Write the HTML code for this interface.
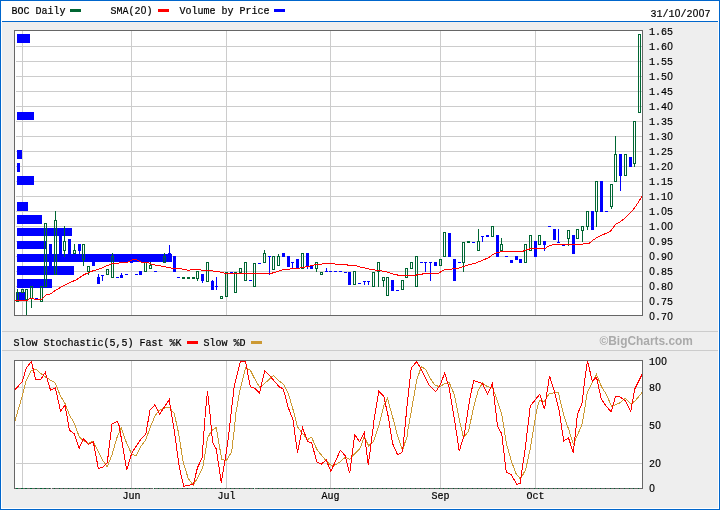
<!DOCTYPE html>
<html><head><meta charset="utf-8"><title>BOC Daily</title>
<style>html,body{margin:0;padding:0;background:#fff}svg{display:block}text{font-family:"Liberation Mono",monospace;font-size:10px;fill:#000;stroke:#000;stroke-width:0.2px}.z{font-family:"Liberation Sans",sans-serif}.wm{font-family:"Liberation Sans",sans-serif;font-weight:bold;font-size:11.9px;fill:#aaaaaa;stroke:none}</style></head><body>
<svg width="720" height="510" viewBox="0 0 720 510" shape-rendering="crispEdges">
<rect x="0" y="0" width="720" height="510" fill="#0066cc"/>
<rect x="1" y="1" width="718" height="508" fill="#ffffff"/>
<rect x="2" y="22" width="716" height="486" fill="#eeeeee"/>
<rect x="2" y="21" width="716" height="1" fill="#0066cc"/>
<rect x="2" y="331" width="716" height="1" fill="#cccccc"/>
<rect x="2" y="350" width="716" height="1" fill="#cccccc"/>
<rect x="14" y="30" width="629" height="286" fill="#666666"/>
<rect x="15" y="31" width="627" height="284" fill="#ffffff"/>
<rect x="16" y="46" width="626" height="1" fill="#cccccc"/>
<rect x="16" y="61" width="626" height="1" fill="#cccccc"/>
<rect x="16" y="76" width="626" height="1" fill="#cccccc"/>
<rect x="16" y="91" width="626" height="1" fill="#cccccc"/>
<rect x="16" y="106" width="626" height="1" fill="#cccccc"/>
<rect x="16" y="121" width="626" height="1" fill="#cccccc"/>
<rect x="16" y="136" width="626" height="1" fill="#cccccc"/>
<rect x="16" y="151" width="626" height="1" fill="#cccccc"/>
<rect x="16" y="166" width="626" height="1" fill="#cccccc"/>
<rect x="16" y="181" width="626" height="1" fill="#cccccc"/>
<rect x="16" y="196" width="626" height="1" fill="#cccccc"/>
<rect x="16" y="211" width="626" height="1" fill="#cccccc"/>
<rect x="16" y="226" width="626" height="1" fill="#cccccc"/>
<rect x="16" y="241" width="626" height="1" fill="#cccccc"/>
<rect x="16" y="256" width="626" height="1" fill="#cccccc"/>
<rect x="16" y="271" width="626" height="1" fill="#cccccc"/>
<rect x="16" y="286" width="626" height="1" fill="#cccccc"/>
<rect x="16" y="301" width="626" height="1" fill="#cccccc"/>
<rect x="22" y="31" width="1" height="284" fill="#cccccc"/>
<rect x="131" y="31" width="1" height="284" fill="#cccccc"/>
<rect x="226" y="31" width="1" height="284" fill="#cccccc"/>
<rect x="330" y="31" width="1" height="284" fill="#cccccc"/>
<rect x="440" y="31" width="1" height="284" fill="#cccccc"/>
<rect x="535" y="31" width="1" height="284" fill="#cccccc"/>
<rect x="14" y="360" width="629" height="129" fill="#666666"/>
<rect x="15" y="361" width="627" height="127" fill="#ffffff"/>
<rect x="16" y="387" width="626" height="1" fill="#cccccc"/>
<rect x="16" y="425" width="626" height="1" fill="#cccccc"/>
<rect x="16" y="463" width="626" height="1" fill="#cccccc"/>
<rect x="22" y="361" width="1" height="127" fill="#cccccc"/>
<rect x="131" y="361" width="1" height="127" fill="#cccccc"/>
<rect x="226" y="361" width="1" height="127" fill="#cccccc"/>
<rect x="330" y="361" width="1" height="127" fill="#cccccc"/>
<rect x="440" y="361" width="1" height="127" fill="#cccccc"/>
<rect x="535" y="361" width="1" height="127" fill="#cccccc"/>
<rect x="17" y="34" width="13" height="9" fill="#0000ff"/>
<rect x="17" y="112" width="17" height="8" fill="#0000ff"/>
<rect x="17" y="150" width="5" height="9" fill="#0000ff"/>
<rect x="17" y="163" width="3" height="9" fill="#0000ff"/>
<rect x="17" y="176" width="17" height="9" fill="#0000ff"/>
<rect x="17" y="202" width="11" height="9" fill="#0000ff"/>
<rect x="17" y="215" width="25" height="9" fill="#0000ff"/>
<rect x="17" y="228" width="55" height="8" fill="#0000ff"/>
<rect x="17" y="241" width="29" height="8" fill="#0000ff"/>
<rect x="17" y="254" width="155" height="8" fill="#0000ff"/>
<rect x="17" y="266" width="57" height="9" fill="#0000ff"/>
<rect x="17" y="279" width="35" height="9" fill="#0000ff"/>
<rect x="17" y="292" width="8" height="9" fill="#0000ff"/>
<rect x="17" y="289" width="1" height="3" fill="#006633"/>
<path d="M16 292h3v10h-3z M17 293v8h1v-8z" fill-rule="evenodd" fill="#006633"/>
<path d="M21 289h3v4h-3z M22 290v2h1v-2z" fill-rule="evenodd" fill="#006633"/>
<rect x="26" y="300" width="1" height="15" fill="#006633"/>
<path d="M25 289h3v11h-3z M26 290v9h1v-9z" fill-rule="evenodd" fill="#006633"/>
<rect x="31" y="299" width="1" height="9" fill="#006633"/>
<path d="M30 286h3v13h-3z M31 287v11h1v-11z" fill-rule="evenodd" fill="#006633"/>
<rect x="35" y="298" width="3" height="1" fill="#0000ff"/>
<path d="M40 286h3v16h-3z M41 287v14h1v-14z" fill-rule="evenodd" fill="#006633"/>
<path d="M44 223h3v64h-3z M45 224v62h1v-62z" fill-rule="evenodd" fill="#006633"/>
<rect x="49" y="244" width="3" height="25" fill="#0000ff"/>
<rect x="55" y="211" width="1" height="9" fill="#006633"/>
<path d="M54 220h3v55h-3z M55 221v53h1v-53z" fill-rule="evenodd" fill="#006633"/>
<rect x="59" y="232" width="3" height="27" fill="#0000ff"/>
<rect x="64" y="226" width="1" height="15" fill="#006633"/>
<rect x="64" y="251" width="1" height="6" fill="#006633"/>
<path d="M63 241h3v10h-3z M64 242v8h1v-8z" fill-rule="evenodd" fill="#006633"/>
<rect x="68" y="239" width="3" height="20" fill="#0000ff"/>
<rect x="74" y="244" width="1" height="6" fill="#006633"/>
<path d="M73 250h3v4h-3z M74 251v2h1v-2z" fill-rule="evenodd" fill="#006633"/>
<rect x="79" y="251" width="1" height="3" fill="#0000ff"/>
<rect x="78" y="244" width="3" height="7" fill="#0000ff"/>
<rect x="83" y="260" width="1" height="6" fill="#006633"/>
<path d="M82 244h3v16h-3z M83 245v14h1v-14z" fill-rule="evenodd" fill="#006633"/>
<rect x="88" y="272" width="1" height="3" fill="#006633"/>
<path d="M87 266h3v6h-3z M88 267v4h1v-4z" fill-rule="evenodd" fill="#006633"/>
<rect x="92" y="258" width="3" height="8" fill="#0000ff"/>
<rect x="98" y="274" width="1" height="3" fill="#0000ff"/>
<rect x="97" y="277" width="3" height="7" fill="#0000ff"/>
<rect x="102" y="276" width="1" height="5" fill="#0000ff"/>
<rect x="101" y="275" width="3" height="1" fill="#0000ff"/>
<path d="M106 269h3v6h-3z M107 270v4h1v-4z" fill-rule="evenodd" fill="#006633"/>
<rect x="112" y="253" width="1" height="3" fill="#006633"/>
<path d="M111 256h3v22h-3z M112 257v20h1v-20z" fill-rule="evenodd" fill="#006633"/>
<rect x="116" y="277" width="3" height="1" fill="#0000ff"/>
<rect x="121" y="273" width="1" height="2" fill="#0000ff"/>
<rect x="120" y="275" width="3" height="3" fill="#0000ff"/>
<rect x="125" y="274" width="3" height="1" fill="#0000ff"/>
<rect x="130" y="258" width="3" height="5" fill="#0000ff"/>
<rect x="135" y="274" width="3" height="1" fill="#0000ff"/>
<rect x="139" y="271" width="3" height="4" fill="#0000ff"/>
<path d="M144 262h3v10h-3z M145 263v8h1v-8z" fill-rule="evenodd" fill="#006633"/>
<rect x="150" y="262" width="1" height="3" fill="#006633"/>
<path d="M149 265h3v4h-3z M150 266v2h1v-2z" fill-rule="evenodd" fill="#006633"/>
<rect x="154" y="271" width="3" height="1" fill="#0000ff"/>
<rect x="164" y="253" width="1" height="3" fill="#006633"/>
<path d="M163 256h3v7h-3z M164 257v5h1v-5z" fill-rule="evenodd" fill="#006633"/>
<rect x="169" y="245" width="1" height="8" fill="#0000ff"/>
<rect x="168" y="253" width="3" height="6" fill="#0000ff"/>
<rect x="173" y="256" width="3" height="16" fill="#0000ff"/>
<rect x="177" y="277" width="3" height="1" fill="#0000ff"/>
<rect x="182" y="277" width="3" height="2" fill="#006633"/>
<rect x="187" y="277" width="3" height="2" fill="#006633"/>
<rect x="192" y="277" width="3" height="2" fill="#006633"/>
<rect x="197" y="279" width="1" height="2" fill="#006633"/>
<path d="M196 271h3v8h-3z M197 272v6h1v-6z" fill-rule="evenodd" fill="#006633"/>
<rect x="202" y="281" width="1" height="2" fill="#0000ff"/>
<rect x="201" y="274" width="3" height="7" fill="#0000ff"/>
<path d="M206 262h3v20h-3z M207 263v18h1v-18z" fill-rule="evenodd" fill="#006633"/>
<rect x="212" y="280" width="1" height="1" fill="#0000ff"/>
<rect x="211" y="281" width="3" height="9" fill="#0000ff"/>
<rect x="216" y="277" width="1" height="9" fill="#0000ff"/>
<rect x="216" y="287" width="1" height="3" fill="#0000ff"/>
<rect x="215" y="286" width="3" height="1" fill="#0000ff"/>
<path d="M220 296h3v3h-3z M221 297v1h1v-1z" fill-rule="evenodd" fill="#006633"/>
<path d="M225 272h3v25h-3z M226 273v23h1v-23z" fill-rule="evenodd" fill="#006633"/>
<rect x="230" y="272" width="3" height="1" fill="#0000ff"/>
<path d="M234 272h3v21h-3z M235 273v19h1v-19z" fill-rule="evenodd" fill="#006633"/>
<path d="M239 268h3v5h-3z M240 269v3h1v-3z" fill-rule="evenodd" fill="#006633"/>
<path d="M244 262h3v19h-3z M245 263v17h1v-17z" fill-rule="evenodd" fill="#006633"/>
<rect x="249" y="280" width="3" height="1" fill="#0000ff"/>
<path d="M253 263h3v24h-3z M254 264v22h1v-22z" fill-rule="evenodd" fill="#006633"/>
<rect x="258" y="263" width="3" height="1" fill="#0000ff"/>
<rect x="264" y="250" width="1" height="3" fill="#006633"/>
<path d="M263 253h3v10h-3z M264 254v8h1v-8z" fill-rule="evenodd" fill="#006633"/>
<rect x="269" y="257" width="1" height="18" fill="#0000ff"/>
<rect x="268" y="256" width="3" height="1" fill="#0000ff"/>
<path d="M272 256h3v14h-3z M273 257v12h1v-12z" fill-rule="evenodd" fill="#006633"/>
<rect x="278" y="254" width="1" height="2" fill="#006633"/>
<path d="M277 256h3v10h-3z M278 257v8h1v-8z" fill-rule="evenodd" fill="#006633"/>
<rect x="282" y="253" width="3" height="4" fill="#0000ff"/>
<rect x="287" y="256" width="3" height="11" fill="#0000ff"/>
<rect x="292" y="263" width="1" height="6" fill="#0000ff"/>
<rect x="291" y="262" width="3" height="1" fill="#0000ff"/>
<rect x="296" y="259" width="3" height="10" fill="#0000ff"/>
<path d="M301 253h3v16h-3z M302 254v14h1v-14z" fill-rule="evenodd" fill="#006633"/>
<rect x="307" y="267" width="1" height="2" fill="#0000ff"/>
<rect x="306" y="253" width="3" height="14" fill="#0000ff"/>
<rect x="310" y="265" width="3" height="4" fill="#0000ff"/>
<rect x="316" y="269" width="1" height="3" fill="#006633"/>
<path d="M315 262h3v7h-3z M316 263v5h1v-5z" fill-rule="evenodd" fill="#006633"/>
<path d="M320 272h3v3h-3z M321 273v1h1v-1z" fill-rule="evenodd" fill="#006633"/>
<rect x="326" y="268" width="1" height="3" fill="#0000ff"/>
<rect x="325" y="271" width="3" height="1" fill="#0000ff"/>
<rect x="329" y="271" width="3" height="1" fill="#0000ff"/>
<rect x="334" y="271" width="3" height="1" fill="#0000ff"/>
<rect x="339" y="271" width="3" height="1" fill="#0000ff"/>
<rect x="344" y="272" width="3" height="1" fill="#0000ff"/>
<rect x="348" y="272" width="3" height="13" fill="#0000ff"/>
<path d="M353 271h3v14h-3z M354 272v12h1v-12z" fill-rule="evenodd" fill="#006633"/>
<rect x="358" y="283" width="3" height="1" fill="#0000ff"/>
<rect x="364" y="282" width="1" height="3" fill="#0000ff"/>
<rect x="363" y="281" width="3" height="1" fill="#0000ff"/>
<rect x="368" y="282" width="1" height="3" fill="#0000ff"/>
<rect x="367" y="281" width="3" height="1" fill="#0000ff"/>
<path d="M372 272h3v15h-3z M373 273v13h1v-13z" fill-rule="evenodd" fill="#006633"/>
<rect x="378" y="272" width="1" height="15" fill="#006633"/>
<path d="M377 262h3v10h-3z M378 263v8h1v-8z" fill-rule="evenodd" fill="#006633"/>
<rect x="383" y="281" width="1" height="6" fill="#006633"/>
<path d="M382 277h3v4h-3z M383 278v2h1v-2z" fill-rule="evenodd" fill="#006633"/>
<path d="M386 277h3v19h-3z M387 278v17h1v-17z" fill-rule="evenodd" fill="#006633"/>
<rect x="391" y="280" width="3" height="11" fill="#0000ff"/>
<rect x="396" y="290" width="3" height="1" fill="#0000ff"/>
<path d="M401 280h3v10h-3z M402 281v8h1v-8z" fill-rule="evenodd" fill="#006633"/>
<path d="M405 268h3v10h-3z M406 269v8h1v-8z" fill-rule="evenodd" fill="#006633"/>
<path d="M410 262h3v7h-3z M411 263v5h1v-5z" fill-rule="evenodd" fill="#006633"/>
<path d="M415 256h3v31h-3z M416 257v29h1v-29z" fill-rule="evenodd" fill="#006633"/>
<rect x="420" y="262" width="3" height="1" fill="#0000ff"/>
<rect x="425" y="263" width="1" height="9" fill="#0000ff"/>
<rect x="424" y="262" width="3" height="1" fill="#0000ff"/>
<rect x="430" y="263" width="1" height="18" fill="#0000ff"/>
<rect x="429" y="262" width="3" height="1" fill="#0000ff"/>
<rect x="434" y="262" width="3" height="4" fill="#0000ff"/>
<path d="M439 259h3v7h-3z M440 260v5h1v-5z" fill-rule="evenodd" fill="#006633"/>
<path d="M443 232h3v25h-3z M444 233v23h1v-23z" fill-rule="evenodd" fill="#006633"/>
<rect x="448" y="233" width="3" height="24" fill="#0000ff"/>
<rect x="453" y="259" width="3" height="22" fill="#0000ff"/>
<rect x="458" y="262" width="3" height="1" fill="#0000ff"/>
<rect x="463" y="263" width="1" height="9" fill="#006633"/>
<path d="M462 242h3v21h-3z M463 243v19h1v-19z" fill-rule="evenodd" fill="#006633"/>
<rect x="467" y="241" width="3" height="2" fill="#006633"/>
<rect x="472" y="242" width="3" height="1" fill="#0000ff"/>
<rect x="478" y="229" width="1" height="12" fill="#006633"/>
<path d="M477 241h3v10h-3z M478 242v8h1v-8z" fill-rule="evenodd" fill="#006633"/>
<rect x="482" y="237" width="1" height="5" fill="#0000ff"/>
<rect x="481" y="236" width="3" height="1" fill="#0000ff"/>
<rect x="486" y="235" width="3" height="2" fill="#0000ff"/>
<path d="M491 226h3v11h-3z M492 227v9h1v-9z" fill-rule="evenodd" fill="#006633"/>
<rect x="496" y="235" width="3" height="22" fill="#0000ff"/>
<rect x="501" y="238" width="1" height="6" fill="#006633"/>
<path d="M500 244h3v7h-3z M501 245v5h1v-5z" fill-rule="evenodd" fill="#006633"/>
<rect x="505" y="256" width="3" height="1" fill="#0000ff"/>
<rect x="510" y="260" width="3" height="3" fill="#0000ff"/>
<rect x="515" y="256" width="3" height="4" fill="#0000ff"/>
<rect x="519" y="259" width="3" height="4" fill="#0000ff"/>
<path d="M524 244h3v19h-3z M525 245v17h1v-17z" fill-rule="evenodd" fill="#006633"/>
<path d="M529 235h3v16h-3z M530 236v14h1v-14z" fill-rule="evenodd" fill="#006633"/>
<rect x="534" y="241" width="3" height="16" fill="#0000ff"/>
<path d="M538 235h3v10h-3z M539 236v8h1v-8z" fill-rule="evenodd" fill="#006633"/>
<rect x="544" y="245" width="1" height="6" fill="#0000ff"/>
<rect x="543" y="241" width="3" height="4" fill="#0000ff"/>
<rect x="548" y="226" width="3" height="1" fill="#0000ff"/>
<rect x="553" y="229" width="3" height="11" fill="#0000ff"/>
<rect x="558" y="229" width="1" height="13" fill="#0000ff"/>
<rect x="557" y="242" width="3" height="1" fill="#0000ff"/>
<rect x="562" y="245" width="3" height="1" fill="#0000ff"/>
<rect x="568" y="239" width="1" height="7" fill="#006633"/>
<path d="M567 230h3v9h-3z M568 231v7h1v-7z" fill-rule="evenodd" fill="#006633"/>
<rect x="572" y="235" width="3" height="19" fill="#0000ff"/>
<path d="M576 229h3v10h-3z M577 230v8h1v-8z" fill-rule="evenodd" fill="#006633"/>
<rect x="582" y="231" width="1" height="11" fill="#006633"/>
<path d="M581 226h3v5h-3z M582 227v3h1v-3z" fill-rule="evenodd" fill="#006633"/>
<rect x="587" y="227" width="1" height="3" fill="#006633"/>
<path d="M586 211h3v16h-3z M587 212v14h1v-14z" fill-rule="evenodd" fill="#006633"/>
<rect x="591" y="211" width="3" height="19" fill="#0000ff"/>
<rect x="596" y="212" width="1" height="15" fill="#006633"/>
<path d="M595 181h3v31h-3z M596 182v29h1v-29z" fill-rule="evenodd" fill="#006633"/>
<rect x="600" y="181" width="3" height="31" fill="#0000ff"/>
<rect x="605" y="211" width="3" height="1" fill="#0000ff"/>
<rect x="611" y="207" width="1" height="2" fill="#006633"/>
<path d="M610 184h3v23h-3z M611 185v21h1v-21z" fill-rule="evenodd" fill="#006633"/>
<rect x="615" y="136" width="1" height="18" fill="#006633"/>
<path d="M614 154h3v28h-3z M615 155v26h1v-26z" fill-rule="evenodd" fill="#006633"/>
<rect x="620" y="176" width="1" height="15" fill="#0000ff"/>
<rect x="619" y="154" width="3" height="22" fill="#0000ff"/>
<path d="M624 154h3v22h-3z M625 155v20h1v-20z" fill-rule="evenodd" fill="#006633"/>
<rect x="629" y="157" width="3" height="10" fill="#0000ff"/>
<rect x="634" y="164" width="1" height="3" fill="#006633"/>
<path d="M633 121h3v43h-3z M634 122v41h1v-41z" fill-rule="evenodd" fill="#006633"/>
<path d="M638 34h3v79h-3z M639 35v77h1v-77z" fill-rule="evenodd" fill="#006633"/>
<clipPath id="c1"><rect x="15" y="31" width="628" height="284"/></clipPath>
<clipPath id="c2"><rect x="15" y="361" width="628" height="127"/></clipPath>
<g clip-path="url(#c1)">
<polyline points="15.0,300.5 28.0,300.0 30.0,298.5 33.0,298.5 35.0,299.7 41.5,299.7 46.4,294.8 50.8,293.9 55.2,290.4 66.5,284.1 76.5,279.7 84.0,274.7 88.4,272.8 92.8,270.9 100.0,268.8 111.0,264.0 128.0,262.0 132.0,260.0 135.0,259.4 138.0,260.5 141.0,262.0 147.0,262.0 152.0,264.5 158.0,265.5 171.0,268.0 180.0,268.5 187.0,270.0 190.0,270.0 197.0,269.5 205.0,270.5 213.0,271.0 220.0,272.0 226.0,273.5 270.0,273.5 275.0,272.5 282.0,270.0 290.0,269.0 300.0,268.0 305.0,267.0 310.0,266.0 316.0,264.5 322.0,264.0 326.0,263.2 332.0,263.2 335.0,264.0 345.0,264.5 350.0,265.5 355.0,265.5 360.0,267.0 365.0,268.0 370.0,269.2 378.0,270.5 385.0,271.5 390.0,273.0 395.0,274.5 400.0,275.5 413.0,275.5 420.0,274.5 425.0,273.5 438.0,273.5 444.0,270.0 452.0,269.0 458.0,268.5 462.0,267.0 470.0,264.5 476.0,263.0 482.0,260.5 488.0,258.0 493.0,254.5 497.0,252.5 502.0,251.7 523.0,251.2 527.0,249.5 532.0,248.5 545.0,248.5 548.0,246.5 553.0,244.5 580.0,244.5 589.7,243.0 593.2,240.0 596.8,237.6 602.6,234.7 607.4,233.0 611.1,230.6 615.6,224.1 620.3,221.8 625.6,217.6 632.0,211.2 636.8,204.7 642.0,196.5" fill="none" stroke="#ff0000" stroke-width="1"/>
</g>
<g clip-path="url(#c2)">
<polyline points="15.0,420.7 22.5,395.2 26.2,380.7 30.8,371.0 35.8,369.0 40.8,373.5 45.3,376.8 50.5,380.2 54.7,382.3 56.7,386.0 60.0,395.2 65.0,403.5 69.5,415.2 74.2,423.0 79.2,436.7 83.3,440.8 88.3,443.3 93.3,441.3 97.5,450.0 102.5,460.0 107.2,466.7 112.0,455.0 116.7,438.3 121.3,427.5 125.8,441.0 131.7,454.2 136.3,455.8 140.8,446.3 145.8,440.0 150.0,427.7 155.0,416.0 159.2,410.2 164.2,408.2 169.2,407.3 174.2,413.5 178.3,431.7 183.3,462.5 188.3,478.7 193.3,485.0 198.3,476.7 202.8,467.5 207.5,438.3 211.7,430.5 216.2,427.6 221.7,459.2 226.2,460.8 231.7,451.7 234.2,430.0 235.8,413.5 240.0,389.8 245.7,367.7 250.3,370.2 255.0,379.3 260.0,388.0 264.7,383.5 269.2,379.3 273.3,375.5 278.7,380.7 283.7,384.3 288.3,393.5 293.0,409.5 297.5,426.7 302.5,433.4 307.5,439.5 311.7,437.3 316.7,449.2 321.3,455.0 326.2,460.8 330.8,465.0 335.3,465.0 340.3,461.7 345.3,457.2 349.7,459.2 354.7,453.8 360.0,448.3 364.2,437.0 368.7,445.8 373.3,441.7 378.5,427.0 383.7,406.0 387.5,398.5 392.5,416.5 397.5,435.5 402.5,450.0 407.0,436.7 408.0,429.3 412.2,406.0 416.7,380.2 421.3,366.8 425.8,369.3 430.8,379.3 435.0,385.2 440.0,386.8 444.7,383.5 449.2,382.7 454.2,394.3 459.2,419.3 463.5,437.6 468.5,431.3 473.7,407.0 478.0,391.0 482.5,382.7 487.5,386.8 492.5,387.7 497.5,401.0 501.7,414.3 503.7,426.0 506.3,443.3 510.8,459.2 515.8,473.3 520.5,479.2 525.8,469.2 530.3,448.3 535.0,420.0 537.5,406.0 539.7,400.2 544.5,401.3 549.2,393.5 553.3,393.0 558.3,392.3 563.7,415.2 568.9,430.0 573.3,444.2 578.3,433.3 582.0,424.5 584.0,413.0 587.3,392.3 592.3,382.8 596.5,374.4 601.3,386.2 606.3,394.5 611.9,406.8 615.6,404.6 620.3,402.7 625.3,398.2 630.7,403.8 634.8,401.3 642.0,392.5" fill="none" stroke="#cc9933" stroke-width="1"/>
<polyline points="15.0,389.8 22.5,381.3 26.2,368.2 31.3,361.5 35.8,379.8 40.8,379.3 45.3,372.3 50.5,390.2 55.3,387.7 60.5,411.0 65.0,405.2 69.5,430.3 74.2,433.7 79.2,448.3 83.3,438.7 88.3,444.2 93.3,441.7 98.3,468.3 102.5,467.5 107.2,463.0 112.0,424.2 117.0,421.3 119.2,425.8 126.7,470.0 131.7,453.3 135.8,446.7 140.8,439.2 145.8,434.0 150.0,410.2 155.0,404.7 159.5,414.3 169.2,399.7 170.8,410.0 174.2,430.0 179.2,466.7 183.7,486.3 188.3,485.3 193.3,484.5 197.5,467.5 202.0,458.3 205.5,411.0 207.5,391.3 210.0,414.3 212.5,441.7 216.3,449.2 221.3,482.5 225.8,455.0 228.3,438.5 234.2,386.0 240.3,361.8 245.5,361.5 250.3,386.8 255.0,388.5 259.5,393.0 264.7,370.7 269.2,375.2 274.2,381.0 279.2,386.8 283.3,389.0 288.3,407.7 293.0,420.0 297.5,452.5 302.5,427.2 307.5,441.7 311.7,442.5 316.7,462.0 321.3,464.2 326.2,460.0 330.8,471.3 335.3,461.7 340.3,450.3 345.3,455.8 349.7,473.3 354.7,434.7 359.7,441.7 364.2,432.5 368.3,465.0 373.3,426.7 374.2,418.5 378.8,391.3 383.7,396.0 388.3,416.8 392.5,443.3 397.5,454.7 402.5,452.5 407.2,404.3 411.3,368.0 416.7,361.5 421.3,369.3 429.2,385.2 435.8,391.5 440.0,385.2 444.7,373.2 449.2,387.7 455.0,422.7 459.2,451.3 464.2,435.0 470.0,397.7 473.7,380.7 482.5,383.5 487.5,394.3 492.5,383.5 497.5,426.0 501.7,433.8 506.3,472.5 510.8,474.2 516.7,484.2 520.0,483.8 525.0,450.0 530.3,406.0 535.0,400.2 539.7,394.3 544.5,409.3 549.5,375.7 554.2,391.0 559.2,411.0 563.7,441.0 568.5,438.0 573.3,452.5 577.5,414.0 582.0,403.5 584.5,381.7 587.5,361.0 592.3,381.1 596.5,377.2 601.3,399.0 606.3,406.3 611.1,411.9 615.6,396.2 620.3,397.1 625.3,400.7 630.7,411.3 634.8,389.0 642.0,374.5" fill="none" stroke="#ff0000" stroke-width="1"/>
</g>
<rect x="16" y="488" width="2" height="1" fill="#006633"/>
<rect x="21" y="488" width="2" height="1" fill="#006633"/>
<rect x="25" y="488" width="2" height="1" fill="#006633"/>
<rect x="30" y="488" width="2" height="1" fill="#006633"/>
<rect x="35" y="488" width="2" height="1" fill="#006633"/>
<rect x="40" y="488" width="2" height="1" fill="#006633"/>
<rect x="44" y="488" width="2" height="1" fill="#006633"/>
<rect x="49" y="488" width="1" height="1" fill="#006633"/>
<rect x="54" y="488" width="1" height="1" fill="#006633"/>
<rect x="59" y="488" width="1" height="1" fill="#006633"/>
<rect x="63" y="488" width="1" height="1" fill="#006633"/>
<rect x="68" y="488" width="1" height="1" fill="#006633"/>
<rect x="73" y="488" width="1" height="1" fill="#006633"/>
<rect x="78" y="488" width="1" height="1" fill="#006633"/>
<rect x="82" y="488" width="1" height="1" fill="#006633"/>
<rect x="87" y="488" width="1" height="1" fill="#006633"/>
<rect x="92" y="488" width="1" height="1" fill="#006633"/>
<rect x="97" y="488" width="1" height="1" fill="#006633"/>
<rect x="101" y="488" width="1" height="1" fill="#006633"/>
<rect x="106" y="488" width="1" height="1" fill="#006633"/>
<rect x="111" y="488" width="1" height="1" fill="#006633"/>
<rect x="116" y="488" width="1" height="1" fill="#006633"/>
<rect x="120" y="488" width="1" height="1" fill="#006633"/>
<rect x="125" y="488" width="1" height="1" fill="#006633"/>
<rect x="130" y="488" width="1" height="1" fill="#006633"/>
<rect x="135" y="488" width="1" height="1" fill="#006633"/>
<rect x="139" y="488" width="1" height="1" fill="#006633"/>
<rect x="144" y="488" width="1" height="1" fill="#006633"/>
<rect x="149" y="488" width="1" height="1" fill="#006633"/>
<rect x="154" y="488" width="1" height="1" fill="#006633"/>
<rect x="158" y="488" width="1" height="1" fill="#006633"/>
<rect x="163" y="488" width="1" height="1" fill="#006633"/>
<rect x="168" y="488" width="1" height="1" fill="#006633"/>
<rect x="173" y="488" width="1" height="1" fill="#006633"/>
<rect x="177" y="488" width="1" height="1" fill="#006633"/>
<rect x="182" y="488" width="1" height="1" fill="#006633"/>
<rect x="187" y="488" width="1" height="1" fill="#006633"/>
<rect x="192" y="488" width="1" height="1" fill="#006633"/>
<rect x="196" y="488" width="1" height="1" fill="#006633"/>
<rect x="201" y="488" width="1" height="1" fill="#006633"/>
<rect x="206" y="488" width="1" height="1" fill="#006633"/>
<rect x="211" y="488" width="1" height="1" fill="#006633"/>
<rect x="215" y="488" width="1" height="1" fill="#006633"/>
<rect x="220" y="488" width="1" height="1" fill="#006633"/>
<rect x="225" y="488" width="1" height="1" fill="#006633"/>
<rect x="230" y="488" width="1" height="1" fill="#006633"/>
<rect x="234" y="488" width="1" height="1" fill="#006633"/>
<rect x="239" y="488" width="1" height="1" fill="#006633"/>
<rect x="244" y="488" width="1" height="1" fill="#006633"/>
<rect x="249" y="488" width="1" height="1" fill="#006633"/>
<rect x="253" y="488" width="1" height="1" fill="#006633"/>
<rect x="258" y="488" width="1" height="1" fill="#006633"/>
<rect x="263" y="488" width="1" height="1" fill="#006633"/>
<rect x="268" y="488" width="1" height="1" fill="#006633"/>
<rect x="272" y="488" width="1" height="1" fill="#006633"/>
<rect x="277" y="488" width="1" height="1" fill="#006633"/>
<rect x="282" y="488" width="1" height="1" fill="#006633"/>
<rect x="287" y="488" width="1" height="1" fill="#006633"/>
<rect x="291" y="488" width="1" height="1" fill="#006633"/>
<rect x="296" y="488" width="1" height="1" fill="#006633"/>
<rect x="301" y="488" width="1" height="1" fill="#006633"/>
<rect x="306" y="488" width="1" height="1" fill="#006633"/>
<rect x="310" y="488" width="1" height="1" fill="#006633"/>
<rect x="315" y="488" width="1" height="1" fill="#006633"/>
<rect x="320" y="488" width="1" height="1" fill="#006633"/>
<rect x="325" y="488" width="1" height="1" fill="#006633"/>
<rect x="329" y="488" width="1" height="1" fill="#006633"/>
<rect x="334" y="488" width="1" height="1" fill="#006633"/>
<rect x="339" y="488" width="1" height="1" fill="#006633"/>
<rect x="344" y="488" width="1" height="1" fill="#006633"/>
<rect x="348" y="488" width="1" height="1" fill="#006633"/>
<rect x="353" y="488" width="1" height="1" fill="#006633"/>
<rect x="358" y="488" width="1" height="1" fill="#006633"/>
<rect x="363" y="488" width="1" height="1" fill="#006633"/>
<rect x="367" y="488" width="1" height="1" fill="#006633"/>
<rect x="372" y="488" width="1" height="1" fill="#006633"/>
<rect x="377" y="488" width="1" height="1" fill="#006633"/>
<rect x="382" y="488" width="1" height="1" fill="#006633"/>
<rect x="386" y="488" width="1" height="1" fill="#006633"/>
<rect x="391" y="488" width="1" height="1" fill="#006633"/>
<rect x="396" y="488" width="1" height="1" fill="#006633"/>
<rect x="401" y="488" width="1" height="1" fill="#006633"/>
<rect x="405" y="488" width="1" height="1" fill="#006633"/>
<rect x="410" y="488" width="1" height="1" fill="#006633"/>
<rect x="415" y="488" width="1" height="1" fill="#006633"/>
<rect x="420" y="488" width="1" height="1" fill="#006633"/>
<rect x="424" y="488" width="1" height="1" fill="#006633"/>
<rect x="429" y="488" width="1" height="1" fill="#006633"/>
<rect x="434" y="488" width="1" height="1" fill="#006633"/>
<rect x="439" y="488" width="1" height="1" fill="#006633"/>
<rect x="443" y="488" width="1" height="1" fill="#006633"/>
<rect x="448" y="488" width="1" height="1" fill="#006633"/>
<rect x="453" y="488" width="1" height="1" fill="#006633"/>
<rect x="458" y="488" width="1" height="1" fill="#006633"/>
<rect x="462" y="488" width="1" height="1" fill="#006633"/>
<rect x="467" y="488" width="1" height="1" fill="#006633"/>
<rect x="472" y="488" width="1" height="1" fill="#006633"/>
<rect x="477" y="488" width="1" height="1" fill="#006633"/>
<rect x="481" y="488" width="1" height="1" fill="#006633"/>
<rect x="486" y="488" width="1" height="1" fill="#006633"/>
<rect x="491" y="488" width="1" height="1" fill="#006633"/>
<rect x="496" y="488" width="1" height="1" fill="#006633"/>
<rect x="500" y="488" width="1" height="1" fill="#006633"/>
<rect x="505" y="488" width="1" height="1" fill="#006633"/>
<rect x="510" y="488" width="1" height="1" fill="#006633"/>
<rect x="515" y="488" width="1" height="1" fill="#006633"/>
<rect x="519" y="488" width="1" height="1" fill="#006633"/>
<rect x="524" y="488" width="1" height="1" fill="#006633"/>
<rect x="529" y="488" width="1" height="1" fill="#006633"/>
<rect x="534" y="488" width="1" height="1" fill="#006633"/>
<rect x="538" y="488" width="1" height="1" fill="#006633"/>
<rect x="543" y="488" width="1" height="1" fill="#006633"/>
<rect x="548" y="488" width="1" height="1" fill="#006633"/>
<rect x="553" y="488" width="1" height="1" fill="#006633"/>
<rect x="557" y="488" width="1" height="1" fill="#006633"/>
<rect x="562" y="488" width="1" height="1" fill="#006633"/>
<rect x="567" y="488" width="1" height="1" fill="#006633"/>
<rect x="572" y="488" width="1" height="1" fill="#006633"/>
<rect x="576" y="488" width="1" height="1" fill="#006633"/>
<rect x="581" y="488" width="1" height="1" fill="#006633"/>
<rect x="586" y="488" width="1" height="1" fill="#006633"/>
<rect x="591" y="488" width="1" height="1" fill="#006633"/>
<rect x="595" y="488" width="1" height="1" fill="#006633"/>
<rect x="600" y="488" width="1" height="1" fill="#006633"/>
<rect x="605" y="488" width="1" height="1" fill="#006633"/>
<rect x="610" y="488" width="1" height="1" fill="#006633"/>
<rect x="614" y="488" width="1" height="1" fill="#006633"/>
<rect x="619" y="488" width="1" height="1" fill="#006633"/>
<rect x="624" y="488" width="1" height="1" fill="#006633"/>
<rect x="629" y="488" width="1" height="1" fill="#006633"/>
<rect x="633" y="488" width="1" height="1" fill="#006633"/>
<rect x="638" y="488" width="1" height="1" fill="#006633"/>
<rect x="51" y="488" width="1" height="1" fill="#dddddd"/>
<rect x="153" y="488" width="1" height="1" fill="#dddddd"/>
<rect x="254" y="488" width="1" height="1" fill="#dddddd"/>
<rect x="359" y="488" width="1" height="1" fill="#dddddd"/>
<rect x="70" y="9" width="11" height="3" fill="#006633"/>
<rect x="158" y="9" width="11" height="3" fill="#ff0000"/>
<rect x="274" y="9" width="11" height="3" fill="#0000ff"/>
<rect x="187" y="341" width="11" height="3" fill="#ff0000"/>
<rect x="251" y="341" width="11" height="3" fill="#cc9933"/>
<filter id="nf" x="0" y="0" width="100%" height="100%" filterUnits="userSpaceOnUse"><feOffset dx="0" dy="0"/></filter><g filter="url(#nf)">
<text x="11.5 17.5 23.5 29.5 35.5 41.5 47.5 53.5 59.5" y="14" xml:space="preserve">BOC Daily</text>
<text x="110.5 116.5 122.5 128.5 134.5 140.7 146.5" y="14" xml:space="preserve">SMA(2<tspan class="z">0</tspan>)</text>
<text x="179.5 185.5 191.5 197.5 203.5 209.5 215.5 221.5 227.5 233.5 239.5 245.5 251.5 257.5 263.5" y="14" xml:space="preserve">Volume by Price</text>
<text x="650.5 656.5 662.5 668.5 674.7 680.5 686.5 692.7 698.7 704.5" y="17" xml:space="preserve">31/1<tspan class="z">0</tspan>/2<tspan class="z">0</tspan><tspan class="z">0</tspan>7</text>
<text x="13.5 19.5 25.5 31.5 37.5 43.5 49.5 55.5 61.5 67.5 73.5 79.5 85.5 91.5 97.5 103.5 109.5 115.5 121.5 127.5 133.5 139.5 145.5 151.5 157.5 163.5 169.5 175.5" y="346" xml:space="preserve">Slow Stochastic(5,5) Fast %K</text>
<text x="203.5 209.5 215.5 221.5 227.5 233.5 239.5" y="346" xml:space="preserve">Slow %D</text>
<text x="599.5" y="345" class="wm">©BigCharts.com</text>
<text x="649 655 661 667" y="35" xml:space="preserve">1.65</text>
<text x="649 655 661 667.2" y="50" xml:space="preserve">1.6<tspan class="z">0</tspan></text>
<text x="649 655 661 667" y="65" xml:space="preserve">1.55</text>
<text x="649 655 661 667.2" y="80" xml:space="preserve">1.5<tspan class="z">0</tspan></text>
<text x="649 655 661 667" y="95" xml:space="preserve">1.45</text>
<text x="649 655 661 667.2" y="110" xml:space="preserve">1.4<tspan class="z">0</tspan></text>
<text x="649 655 661 667" y="125" xml:space="preserve">1.35</text>
<text x="649 655 661 667.2" y="140" xml:space="preserve">1.3<tspan class="z">0</tspan></text>
<text x="649 655 661 667" y="155" xml:space="preserve">1.25</text>
<text x="649 655 661 667.2" y="170" xml:space="preserve">1.2<tspan class="z">0</tspan></text>
<text x="649 655 661 667" y="185" xml:space="preserve">1.15</text>
<text x="649 655 661 667.2" y="200" xml:space="preserve">1.1<tspan class="z">0</tspan></text>
<text x="649 655 661.2 667" y="215" xml:space="preserve">1.<tspan class="z">0</tspan>5</text>
<text x="649 655 661.2 667.2" y="230" xml:space="preserve">1.<tspan class="z">0</tspan><tspan class="z">0</tspan></text>
<text x="649.2 655 661 667" y="245" xml:space="preserve"><tspan class="z">0</tspan>.95</text>
<text x="649.2 655 661 667.2" y="260" xml:space="preserve"><tspan class="z">0</tspan>.9<tspan class="z">0</tspan></text>
<text x="649.2 655 661 667" y="275" xml:space="preserve"><tspan class="z">0</tspan>.85</text>
<text x="649.2 655 661 667.2" y="290" xml:space="preserve"><tspan class="z">0</tspan>.8<tspan class="z">0</tspan></text>
<text x="649.2 655 661 667" y="305" xml:space="preserve"><tspan class="z">0</tspan>.75</text>
<text x="649.2 655 661 667.2" y="320" xml:space="preserve"><tspan class="z">0</tspan>.7<tspan class="z">0</tspan></text>
<text x="649 655.2 661.2" y="365" xml:space="preserve">1<tspan class="z">0</tspan><tspan class="z">0</tspan></text>
<text x="649 655.2" y="391" xml:space="preserve">8<tspan class="z">0</tspan></text>
<text x="649 655.2" y="429" xml:space="preserve">5<tspan class="z">0</tspan></text>
<text x="649 655.2" y="467" xml:space="preserve">2<tspan class="z">0</tspan></text>
<text x="649.2" y="492" xml:space="preserve"><tspan class="z">0</tspan></text>
<text x="122.5 128.5 134.5" y="499" xml:space="preserve">Jun</text>
<text x="217.5 223.5 229.5" y="499" xml:space="preserve">Jul</text>
<text x="321.5 327.5 333.5" y="499" xml:space="preserve">Aug</text>
<text x="431.5 437.5 443.5" y="499" xml:space="preserve">Sep</text>
<text x="526.5 532.5 538.5" y="499" xml:space="preserve">Oct</text>
</g>
</svg></body></html>
